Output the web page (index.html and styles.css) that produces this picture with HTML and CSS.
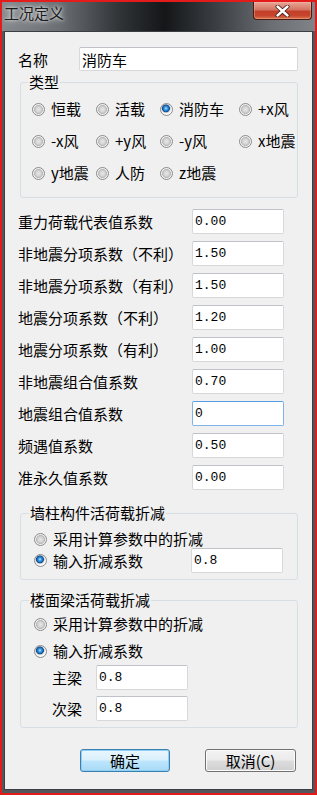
FILE: index.html
```html
<!DOCTYPE html>
<html lang="zh-CN">
<head>
  <meta charset="UTF-8">
  <meta name="viewport" content="width=device-width, initial-scale=1.0">
  <title>工况定义</title>
  <link rel="stylesheet" href="styles.css">
</head>
<body>
  <div class="window">
    <div class="titlebar">
      <span class="title">工况定义</span>
      <span class="close">
        <svg width="15" height="12" viewBox="0 0 15 12">
          <path d="M2.5 1.5 L12.5 10.5 M12.5 1.5 L2.5 10.5" stroke="#3a1a14" stroke-width="4" stroke-linecap="round"/>
          <path d="M2.5 1.5 L12.5 10.5 M12.5 1.5 L2.5 10.5" stroke="#ffffff" stroke-width="2.4" stroke-linecap="round"/>
        </svg>
      </span>
    </div>

    <div class="client">
      <div class="name-row">
        <label for="caseName">名称</label>
        <input class="text name" id="caseName" type="text" value="消防车">
      </div>

      <fieldset class="group type-group">
        <legend>类型</legend>
        <div class="radio-grid">
          <label class="opt"><input type="radio" name="caseType">恒载</label>
          <label class="opt"><input type="radio" name="caseType">活载</label>
          <label class="opt"><input type="radio" name="caseType" checked>消防车</label>
          <label class="opt"><input type="radio" name="caseType">+x风</label>
          <label class="opt"><input type="radio" name="caseType">-x风</label>
          <label class="opt"><input type="radio" name="caseType">+y风</label>
          <label class="opt"><input type="radio" name="caseType">-y风</label>
          <label class="opt"><input type="radio" name="caseType">x地震</label>
          <label class="opt"><input type="radio" name="caseType">y地震</label>
          <label class="opt"><input type="radio" name="caseType">人防</label>
          <label class="opt"><input type="radio" name="caseType">z地震</label>
        </div>
      </fieldset>

      <div class="coef-list">
        <div class="coef"><span>重力荷载代表值系数</span><input class="text num" type="text" value="0.00"></div>
        <div class="coef"><span>非地震分项系数（不利）</span><input class="text num" type="text" value="1.50"></div>
        <div class="coef"><span>非地震分项系数（有利）</span><input class="text num" type="text" value="1.50"></div>
        <div class="coef"><span>地震分项系数（不利）</span><input class="text num" type="text" value="1.20"></div>
        <div class="coef"><span>地震分项系数（有利）</span><input class="text num" type="text" value="1.00"></div>
        <div class="coef"><span>非地震组合值系数</span><input class="text num" type="text" value="0.70"></div>
        <div class="coef"><span>地震组合值系数</span><input class="text num focused" type="text" value="0"></div>
        <div class="coef"><span>频遇值系数</span><input class="text num" type="text" value="0.50"></div>
        <div class="coef"><span>准永久值系数</span><input class="text num" type="text" value="0.00"></div>
      </div>

      <fieldset class="group wall-group">
        <legend>墙柱构件活荷载折减</legend>
        <label class="opt line"><input type="radio" name="wallMode">采用计算参数中的折减</label>
        <div class="input-line">
          <label class="opt"><input type="radio" name="wallMode" checked>输入折减系数</label>
          <input class="text num" type="text" value="0.8">
        </div>
      </fieldset>

      <fieldset class="group beam-group">
        <legend>楼面梁活荷载折减</legend>
        <label class="opt line"><input type="radio" name="beamMode">采用计算参数中的折减</label>
        <label class="opt line second"><input type="radio" name="beamMode" checked>输入折减系数</label>
        <div class="sub-row main"><span>主梁</span><input class="text num" type="text" value="0.8"></div>
        <div class="sub-row"><span>次梁</span><input class="text num" type="text" value="0.8"></div>
      </fieldset>

      <div class="buttons">
        <button class="btn default" type="button">确定</button>
        <button class="btn" type="button">取消(C)</button>
      </div>
    </div>
  </div>
</body>
</html>
```

FILE: styles.css
```css
body {
    margin: 0;
    padding: 0;
    font-family: "Noto Sans CJK SC", "Noto Sans", sans-serif;
    font-size: 15px;
    color: #000;
    background: #fff;
}

.window {
    width: 317px;
    height: 795px;
    box-sizing: border-box;
    border: 2px solid #e31b1b;
    background: #53575b;
    display: flex;
    flex-direction: column;
}

.titlebar {
    height: 29px;
    flex: none;
    display: flex;
    justify-content: space-between;
    align-items: flex-start;
    background: linear-gradient(to right, #868a8e 0%, #6c7074 18%, #2f3336 38%, #141618 52%, #3a3e42 68%, #6b6f73 86%, #808488 100%);
}

.title {
    margin: 1px 0 0 2px;
    line-height: 20px;
    color: #1c1c1c;
    text-shadow: 0 0 6px rgba(255, 255, 255, 0.9), 0 0 3px rgba(255, 255, 255, 0.8);
}

.close {
    width: 59px;
    height: 18px;
    margin-right: 3px;
    box-sizing: border-box;
    border: 1px solid #4a1c16;
    border-top: none;
    border-radius: 0 0 4px 4px;
    background: linear-gradient(to bottom, #e9a696 0%, #d47563 45%, #c2402a 55%, #c7452c 80%, #d9764f 100%);
    box-shadow: inset 0 0 0 1px rgba(255, 200, 180, 0.35);
    display: flex;
    justify-content: center;
    align-items: center;
}

.client {
    flex: 1;
    margin: 0 2px 3px 2px;
    border: 1px solid #3b3f43;
    background: #f0f0f0;
    padding: 15px 0 0 13px;
}

input.text {
    box-sizing: border-box;
    height: 25px;
    margin: 0;
    border: 1px solid #d6d8dc;
    border-top-color: #bfc2c6;
    border-radius: 2px;
    background: #fff;
    padding: 0 2px;
    outline: none;
    color: #000;
}

input.num {
    width: 92px;
    font-family: "Liberation Mono", monospace;
    font-size: 13px;
}

input.focused {
    border-color: #7eb4ea;
    border-top-color: #569de5;
}

.name-row {
    display: flex;
    align-items: center;
    height: 24px;
}

.name-row label {
    width: 61px;
}

input.name {
    width: 219px;
    height: 24px;
    font-family: "Noto Sans CJK SC", sans-serif;
    font-size: 15px;
}

.group {
    box-sizing: border-box;
    width: 278px;
    min-inline-size: 0;
    margin: 0 0 0 2px;
    border: 1px solid #d5dfe5;
    border-radius: 3px;
}

.group legend {
    line-height: 18px;
    padding: 0 1px;
}

.opt {
    display: flex;
    align-items: center;
    line-height: 18px;
    white-space: nowrap;
}

.opt input {
    appearance: none;
    -webkit-appearance: none;
    width: 13px;
    height: 13px;
    margin: 0 6px 0 0;
    flex: none;
    border: 1px solid #8a8b8c;
    border-radius: 50%;
    background: radial-gradient(circle at 50% 50%, #e6e6e6 0, #d6d6d6 2.5px, #c2c2c2 3.6px, #b9b9b9 4.1px, #ececec 4.8px, #fafafa 6px);
}

.opt input:checked {
    background: radial-gradient(circle at 45% 40%, #b9e4ff 0, #3c9be3 1.6px, #1764b4 3px, #0d4a8c 3.6px, #c8c8c8 4.2px, #f2f2f2 5px, #fafafa 6px);
}

.type-group {
    margin-top: 2px;
    padding: 2px 0 8px 11px;
}

.type-group legend {
    margin-left: -4px;
}

.radio-grid {
    display: grid;
    grid-template-columns: 64px 64px 79px 1fr;
    grid-auto-rows: 32px;
}

.coef-list {
    margin-top: 7px;
}

.coef {
    display: flex;
    align-items: center;
    height: 32px;
}

.coef span {
    width: 174px;
    flex: none;
}

.wall-group {
    margin-top: 11px;
    padding: 8px 14px 6px 13px;
}

.wall-group legend,
.beam-group legend {
    margin-left: -5px;
}

.opt.line {
    height: 18px;
}

.input-line {
    display: flex;
    align-items: center;
    justify-content: space-between;
    height: 25px;
}

.beam-group {
    margin-top: 11px;
    padding: 5px 14px 6px 13px;
}

.beam-group .opt.line {
    height: 20px;
}

.beam-group .opt.second {
    margin-top: 7px;
}

.sub-row {
    display: flex;
    align-items: center;
    height: 25px;
    margin-top: 6px;
    padding-left: 18px;
}

.sub-row.main {
    margin-top: 4px;
}

.sub-row span {
    width: 44px;
}

.buttons {
    display: flex;
    gap: 35px;
    margin-top: 21px;
    padding-left: 62px;
}

.btn {
    width: 91px;
    height: 23px;
    padding: 0;
    font-family: "Noto Sans CJK SC", sans-serif;
    font-size: 15px;
    line-height: 20px;
    color: #000;
    border: 1px solid #707070;
    border-radius: 3px;
    background: linear-gradient(to bottom, #f2f2f2 0%, #ebebeb 48%, #dddddd 52%, #cfcfcf 100%);
    box-shadow: inset 0 0 0 1px #fcfcfc;
}

.btn.default {
    width: 90px;
    border-color: #3c7fb1;
    background: linear-gradient(to bottom, #eaf6fd 0%, #d9f0fc 48%, #bee6fd 52%, #a7d9f5 100%);
    box-shadow: inset 0 0 0 1px #8fd0f2;
}
```
